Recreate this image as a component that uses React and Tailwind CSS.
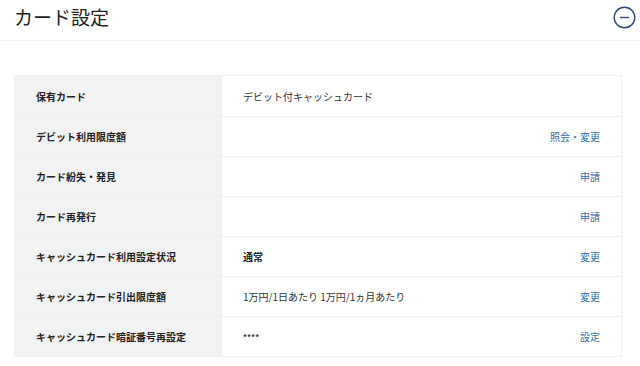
import React from 'react'

const rows = [
  { label: '保有カード', value: 'デビット付キャッシュカード' },
  { label: 'デビット利用限度額', link: '照会・変更' },
  { label: 'カード紛失・発見', link: '申請' },
  { label: 'カード再発行', link: '申請' },
  { label: 'キャッシュカード利用設定状況', value: '通常', bold: true, link: '変更' },
  { label: 'キャッシュカード引出限度額', value: '1万円/1日あたり 1万円/1ヵ月あたり', link: '変更' },
  { label: 'キャッシュカード暗証番号再設定', value: '****', small: true, link: '設定' },
]

export default function App() {
  return (
    <div
      className="w-[640px] h-[366px] bg-white overflow-hidden"
      style={{ fontFamily: '"Noto Sans CJK JP", "Noto Sans", sans-serif' }}
    >
      <div className="h-[41px] flex items-center justify-between pl-[14px] pr-[4px] border-b border-[#f3f3f3]">
        <h1 className="text-[19px] leading-none text-[#222] font-normal -mt-[8px]">カード設定</h1>
        <svg width="23" height="23" viewBox="0 0 23 23" className="-mt-[5px]">
          <circle cx="11.5" cy="11.5" r="10.3" fill="none" stroke="#2a4a78" strokeWidth="1.4" />
          <line x1="7" y1="11.5" x2="16" y2="11.5" stroke="#2a4a78" strokeWidth="1.4" />
        </svg>
      </div>
      <div className="mt-[34px] mx-[14px] mr-[18px] border border-[#eeeeee]">
        {rows.map((r, i) => (
          <div
            key={i}
            className={`flex h-[40px] ${i > 0 ? 'border-t border-[#eceef0]' : ''}`}
          >
            <div className="w-[207px] shrink-0 bg-[#f1f2f4] flex items-center pl-[21px] text-[10px] font-bold text-[#222]">
              {r.label}
            </div>
            <div className="flex-1 flex items-center justify-between pl-[21px] pr-[21px] text-[10px] text-[#333]">
              <span className={r.bold ? 'font-bold text-[#222]' : r.small ? 'text-[8px] font-bold' : ''}>{r.value || ''}</span>
              {r.link && <span className="text-[#2f6ea5]">{r.link}</span>}
            </div>
          </div>
        ))}
      </div>
    </div>
  )
}
